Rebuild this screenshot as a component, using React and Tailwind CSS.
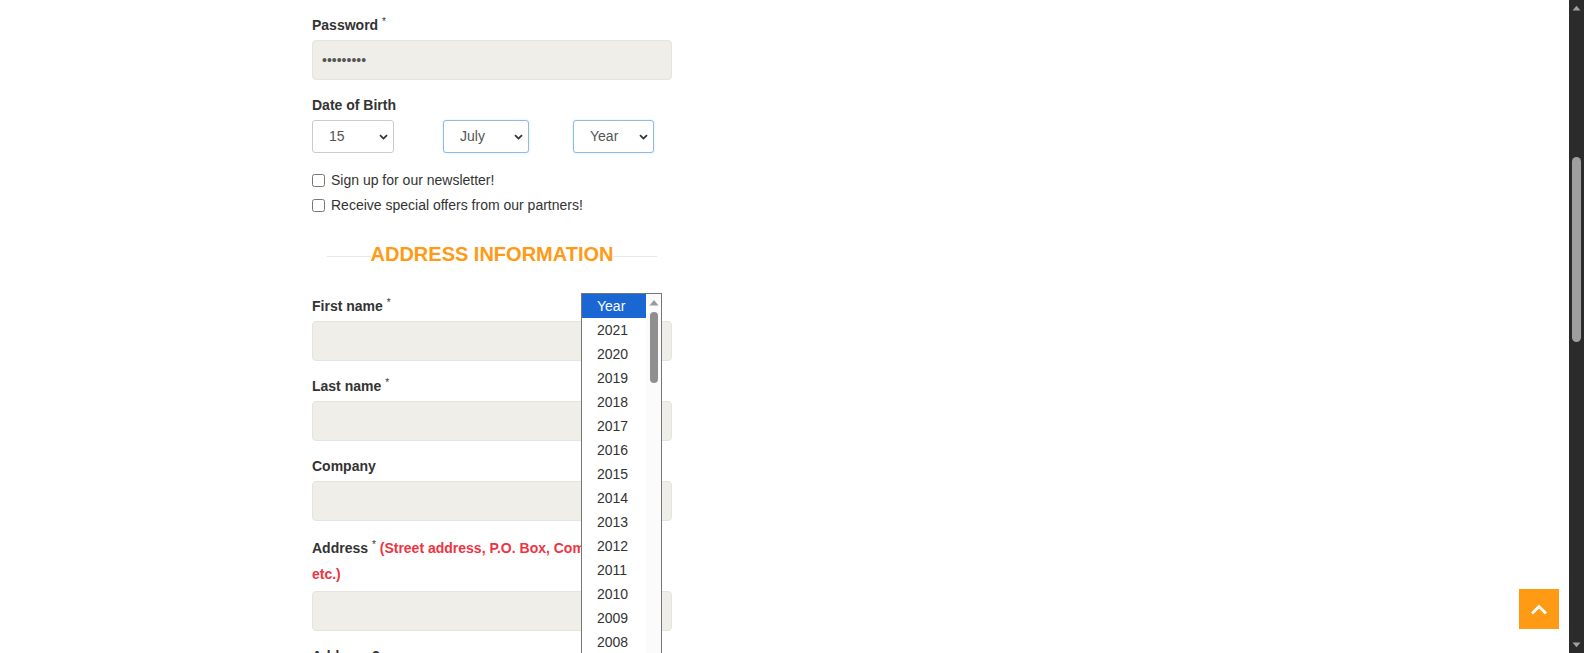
import { useState } from "react";

const YEARS = Array.from({ length: 40 }, (_, i) => String(2021 - i));

function Label({ children, className = "" }) {
  return (
    <label className={`block text-[14px] font-bold leading-[20px] text-[#333] ${className}`}>
      {children}
    </label>
  );
}

function Req() {
  return (
    <>
      {" "}
      <sup className="text-[10px] font-normal">*</sup>
    </>
  );
}

function TextField({ label, required, type = "text", value = "" }) {
  return (
    <div className="mb-[15px]">
      <Label className="mb-[5px]">
        {label}
        {required && <Req />}
      </Label>
      <input
        type={type}
        readOnly
        defaultValue={value}
        className="block h-[40px] w-full rounded-[4px] border border-[#e5e4de] bg-[#efeee8] pl-[9px] text-[14px] text-[#555] outline-none"
      />
    </div>
  );
}

function FakeSelect({ value, width, focused = false, className = "" }) {
  return (
    <div
      className={`flex h-[33px] items-center justify-between rounded-[3px] border bg-white pl-[16px] pr-[5px] text-[14px] text-[#555] ${
        focused ? "border-[#8ebbe6] shadow-[0_0_2px_rgba(102,175,233,0.35)]" : "border-[#cbcbcb]"
      } ${width} ${className}`}
    >
      <span>{value}</span>
      <svg width="9" height="6" viewBox="0 0 9 6" className="text-[#333]">
        <path d="M1 1.2 L4.5 4.6 L8 1.2" fill="none" stroke="currentColor" strokeWidth="1.8" />
      </svg>
    </div>
  );
}

function CheckRow({ text }) {
  return (
    <label className="flex h-[25px] items-center gap-[6px] text-[14px] text-[#333]">
      <input type="checkbox" className="m-0 h-[13px] w-[13px]" />
      <span>{text}</span>
    </label>
  );
}

function SectionTitle({ children }) {
  return (
    <div className="mx-[15px] mb-[28px] mt-[22px] flex h-[28px] items-start">
      <div className="mt-[16px] h-px flex-1 bg-[#e8e8e8]" />
      <h3 className="text-[20px] font-bold uppercase leading-[28px] text-[#ff9a16]">{children}</h3>
      <div className="mt-[16px] h-px flex-1 bg-[#e8e8e8]" />
    </div>
  );
}

function YearListbox() {
  const [active] = useState("Year");
  return (
    <div className="absolute left-[581px] top-[293px] flex h-[420px] w-[81px] overflow-hidden border border-[#767676] bg-white">
      <ul className="w-[64px] text-[14px] text-[#333]">
        {["Year", ...YEARS].map((y) => (
          <li
            key={y}
            className={`flex h-[24px] items-center pl-[15px] ${
              y === active ? "bg-[#1a67d3] text-white" : ""
            }`}
          >
            {y}
          </li>
        ))}
      </ul>
      <div className="flex w-[15px] flex-col items-center bg-[#fbfbfb]">
        <svg width="10" height="7" viewBox="0 0 10 7" className="mt-[5px]">
          <path d="M0.5 6.5 L5 1 L9.5 6.5 Z" fill="#999" />
        </svg>
        <div className="mt-[6px] h-[71px] w-[8px] rounded-full bg-[#8f8f8f]" />
      </div>
    </div>
  );
}

function PageScrollbar() {
  return (
    <div className="flex h-screen w-[15px] flex-col items-center bg-[#2b2b2b]">
      <svg width="9" height="6" viewBox="0 0 9 6" className="mt-[5px]">
        <path d="M0.5 5.5 L4.5 0.8 L8.5 5.5 Z" fill="#a0a0a0" />
      </svg>
      <div className="flex-1">
        <div className="mt-[146px] h-[185px] w-[9px] rounded-full bg-[#9f9f9f]" />
      </div>
      <svg width="9" height="6" viewBox="0 0 9 6" className="mb-[5px]">
        <path d="M0.5 0.5 L4.5 5.2 L8.5 0.5 Z" fill="#a0a0a0" />
      </svg>
    </div>
  );
}

export default function App() {
  return (
    <div className="flex h-screen w-full overflow-hidden bg-white font-['Liberation_Sans',Arial,sans-serif]">
      <main className="relative flex-1 overflow-hidden">
        <form className="ml-[312px] w-[360px] pt-[15px]">
          <TextField label="Password" required type="password" value="123456789" />

          {/* Date of birth */}
          <Label className="mb-[5px]">Date of Birth</Label>
          <div className="mb-[15px] flex">
            <FakeSelect value="15" width="w-[82px]" />
            <FakeSelect value="July" width="w-[86px]" focused className="ml-[49px]" />
            <FakeSelect value="Year" width="w-[81px]" focused className="ml-[44px]" />
          </div>

          <CheckRow text="Sign up for our newsletter!" />
          <CheckRow text="Receive special offers from our partners!" />

          <SectionTitle>Address information</SectionTitle>

          <TextField label="First name" required />
          <TextField label="Last name" required />
          <TextField label="Company" />

          <div className="mb-[15px] -mt-[1px]">
            <Label className="mb-[4px] leading-[26px]">
              Address
              <Req />{" "}
              <span className="text-[#ee3442]">(Street address, P.O. Box, Company name, etc.)</span>
            </Label>
            <input
              type="text"
              readOnly
              className="block h-[40px] w-full rounded-[4px] border border-[#e5e4de] bg-[#efeee8] outline-none"
            />
          </div>

          <TextField label="Address 2" />
        </form>

        <YearListbox />

        {/* back to top */}
        <button
          type="button"
          className="absolute bottom-[24px] right-[10px] flex h-[40px] w-[40px] items-center justify-center bg-[#ff9a14]"
        >
          <svg width="18" height="11" viewBox="0 0 18 11">
            <path d="M2 9.5 L9 2.5 L16 9.5" fill="none" stroke="white" strokeWidth="2.8" />
          </svg>
        </button>
      </main>
      <PageScrollbar />
    </div>
  );
}
